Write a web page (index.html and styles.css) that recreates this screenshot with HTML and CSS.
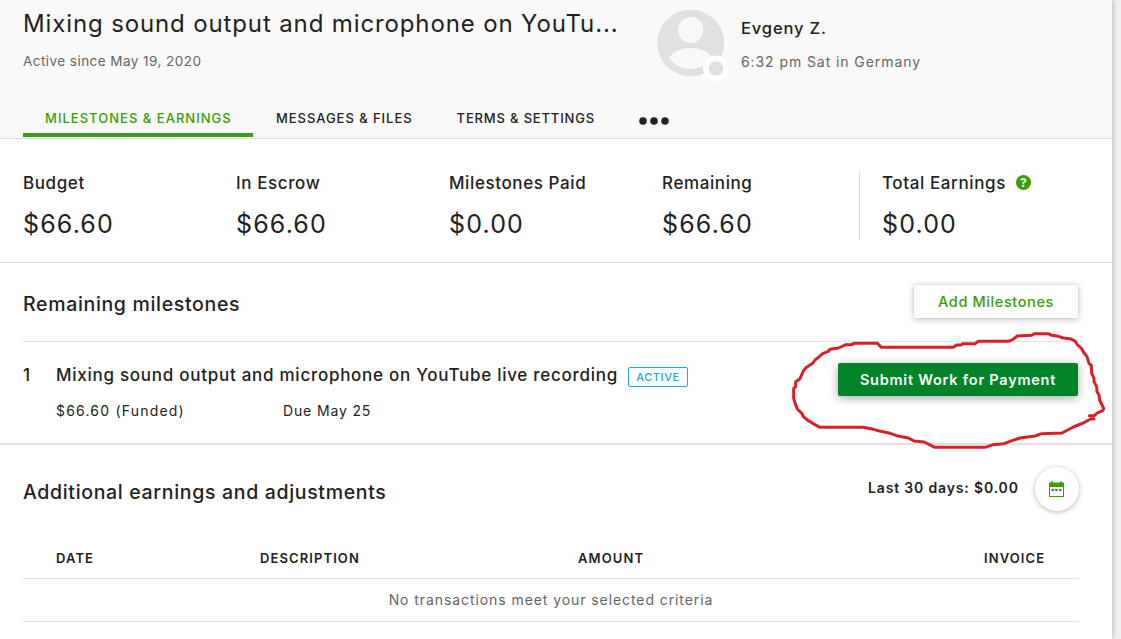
FILE: index.html
```html
<!DOCTYPE html>
<html lang="en">
  <head>
    <meta charset="UTF-8" />
    <title>Milestones &amp; Earnings</title>
    <link rel="stylesheet" href="styles.css">
  </head>
  <body>
    <main class="page">
      <header class="header">
        <div class="header-top">
          <div class="contract">
            <h1>Mixing sound output and microphone on YouTu...</h1>
            <p class="since">Active since May 19, 2020</p>
          </div>
          <div class="avatar">
            <svg width="72" height="74" viewBox="0 0 72 74">
              <circle cx="33.7" cy="33" r="33.4" fill="#e0e0e0" />
              <ellipse cx="33.7" cy="20" rx="12.500" ry="13" fill="#f9f9f9" />
              <path d="M12 48C16 41 24 38 33.500 38S51 41 55 48C50 55 42 59 33.500 59S17 55 12 48Z" fill="#f9f9f9" />
              <circle cx="59" cy="58.500" r="13" fill="#fff" />
              <circle cx="59" cy="58.500" r="7.300" fill="#e0e0e0" />
            </svg>
          </div>
          <div class="client">
            <p class="name">Evgeny Z.</p>
            <p class="time">6:32 pm Sat in Germany</p>
          </div>
        </div>
        <nav class="tabs">
          <a class="tab active">MILESTONES &amp; EARNINGS</a>
          <a class="tab">MESSAGES &amp; FILES</a>
          <a class="tab terms">TERMS &amp; SETTINGS</a>
          <a class="more">
            <svg width="30" height="8" viewBox="0 0 30 8" fill="#222">
              <circle cx="4" cy="4" r="3.800" />
              <circle cx="15" cy="4" r="3.800" />
              <circle cx="26" cy="4" r="3.800" />
            </svg>
          </a>
        </nav>
      </header>

      <section class="stats">
        <div class="stat">
          <p class="label">Budget</p>
          <p class="value">$66.60</p>
        </div>
        <div class="stat">
          <p class="label">In Escrow</p>
          <p class="value">$66.60</p>
        </div>
        <div class="stat">
          <p class="label">Milestones Paid</p>
          <p class="value">$0.00</p>
        </div>
        <div class="stat">
          <p class="label">Remaining</p>
          <p class="value">$66.60</p>
        </div>
        <div class="stat total">
          <p class="label">Total Earnings <b class="help">?</b></p>
          <p class="value">$0.00</p>
        </div>
      </section>

      <section class="milestones">
        <div class="section-head">
          <h2 class="remaining">Remaining milestones</h2>
          <button class="btn btn-add">Add Milestones</button>
        </div>
        <div class="milestone">
          <div class="number">1</div>
          <div class="info">
            <div class="milestone-title">
              <h3>Mixing sound output and microphone on YouTube live recording</h3>
              <div class="badge">ACTIVE</div>
            </div>
            <div class="meta">
              <span class="funded">$66.60 (Funded)</span>
              <span class="due">Due May 25</span>
            </div>
          </div>
          <button class="btn btn-submit">Submit Work for Payment</button>
        </div>
      </section>

      <section class="earnings">
        <div class="earnings-head">
          <h2 class="additional">Additional earnings and adjustments</h2>
          <p class="last">Last 30 days: $0.00</p>
          <button class="calendar">
            <svg width="15" height="16" viewBox="0 0 15 16">
              <path d="M0 1.500h2V.500h2v1h7V.500h2v1h2V16H0Z" fill="#37a000" />
              <path d="M1 6h13v9H1Z" fill="#fff" />
              <path d="M2.500 8h2.500v2H2.500zM6.200 8h2.500v2h-2.500zM10 8h2.500v2H10z" fill="#4b8a1c" />
            </svg>
          </button>
        </div>
        <table>
          <thead>
            <tr>
              <th class="date">DATE</th>
              <th class="description">DESCRIPTION</th>
              <th class="amount">AMOUNT</th>
              <th class="invoice">INVOICE</th>
            </tr>
          </thead>
          <tbody>
            <tr>
              <td colspan="4">No transactions meet your selected criteria</td>
            </tr>
          </tbody>
        </table>
      </section>
    </main>

    <!-- hand drawn circle around the submit button -->
    <svg class="marker" width="341" height="140" viewBox="0 0 1023 420">
      <path d="M942 297L932 297L910 309L880 321L846 339L785 341L765 348L720 354L690 364L672 371L640 374L615 382H465L432 366L402 363L385 354L350 347L330 340L302 334L280 328L250 322H120L98 310L82 300L70 290L67 282L52 267L45 248L41 235V205L47 200V185L60 176L70 153L78 143L98 130L105 120L118 110L128 101L145 94L150 88L176 84L198 74H215L222 70H292L304 82H520L530 75H544L548 71H585L595 64H685L698 59L712 48L755 46L763 41H805L815 46L835 49L850 54L870 56L885 63L893 75L904 85L912 99L921 110L927 130L934 136L935 160L942 175V185L950 200L951 215L957 225L959 240L971 266L968 272L952 279L943 287H928" />
    </svg>
  </body>
</html>
```

FILE: styles.css
```css
* {
  box-sizing: border-box;
}

body {
  margin: 0;
  height: 639px;
  overflow: hidden;
  position: relative;
  background-color: #f0f0f0;
  font-family: Inter, "Liberation Sans", sans-serif;
  font-size: 14px;
  color: #222;
}

h1,
h2,
h3,
p {
  margin: 0;
  white-space: nowrap;
}

.page {
  width: 1112px;
  height: 639px;
  background-color: #fff;
  box-shadow: 0 0 6px rgba(0, 0, 0, 0.3);
}

/* header */
.header {
  height: 139px;
  background-color: #f9f9f9;
  border-bottom: 1px solid #e0e0e0;
  padding: 8px 23px 0;
}

.header-top {
  display: flex;
  height: 93px;
}

.contract {
  width: 634px;
}

h1 {
  font-size: 24px;
  font-weight: 400;
  line-height: 32px;
  letter-spacing: 0.87px;
}

.since {
  margin-top: 11px;
  line-height: 20px;
  font-size: 13.5px;
  letter-spacing: 0.45px;
  color: #656565;
}

.avatar {
  width: 84px;
  padding-top: 2px;
}

.name {
  margin-top: 8px;
  font-size: 16.5px;
  font-weight: 500;
  line-height: 24px;
  letter-spacing: 0.85px;
}

.time {
  margin-top: 12px;
  line-height: 20px;
  letter-spacing: 0.92px;
  color: #656565;
}

.tabs {
  display: flex;
  height: 36px;
}

.tab {
  font-size: 13px;
  font-weight: 500;
  line-height: 35px;
  letter-spacing: 0.95px;
  white-space: nowrap;
  margin-right: 44px;
}

.tab.active {
  width: 230px;
  margin-right: 23px;
  padding-left: 22px;
  color: #37a000;
  border-bottom: 4px solid #3c9a14;
  letter-spacing: 1.02px;
}

.tab.terms {
  letter-spacing: 0.83px;
}

.more {
  padding-top: 10px;
}

/* stats */
.stats {
  display: grid;
  grid-template-columns: 213px 213px 213px 197px 1fr;
  height: 124px;
  padding: 32px 23px 23px;
  border-bottom: 1px solid #e0e0e0;
}

.total {
  border-left: 1px solid #ddd;
  padding-left: 22px;
  height: 69px;
}

.label {
  display: flex;
  align-items: center;
  height: 24px;
  font-size: 17px;
  font-weight: 500;
  letter-spacing: 0.6px;
}

.value {
  margin-top: 13px;
  font-size: 25px;
  line-height: 32px;
  letter-spacing: 1.15px;
}

.help {
  width: 15px;
  height: 15px;
  margin: -1px 0 0 10px;
  border-radius: 50%;
  background-color: #37a000;
  color: #fff;
  font-size: 12px;
  line-height: 15px;
  letter-spacing: 0;
  text-align: center;
}

/* milestones */
.milestones {
  height: 182px;
  border-bottom: 2px solid #e0e0e0;
  padding: 22px 34px 0 23px;
}

.section-head {
  display: flex;
  justify-content: space-between;
  height: 57px;
  margin-right: -1px;
  padding-right: 1px;
  border-bottom: 1px solid #e0e0e0;
}

h2 {
  font-size: 19.5px;
  font-weight: 500;
  line-height: 39px;
  letter-spacing: 0.67px;
}

.btn {
  height: 33px;
  padding: 0;
  border: none;
  border-radius: 2px;
  font-family: inherit;
  font-size: 14.5px;
  font-weight: 500;
  letter-spacing: 0.6px;
  white-space: nowrap;
}

.btn-add {
  width: 164px;
  background-color: #fff;
  color: #37a000;
  box-shadow: 0 1px 6px rgba(0, 0, 0, 0.3);
}

.btn-submit {
  width: 240px;
  margin-top: 1px;
  background-color: #008329;
  color: #fff;
  font-weight: 600;
  letter-spacing: 0.76px;
  box-shadow: 0 2px 10px rgba(0, 0, 0, 0.35);
}

.milestone {
  display: flex;
  padding-top: 20px;
}

.number {
  width: 33px;
  font-size: 17px;
  font-weight: 500;
  line-height: 27px;
}

.info {
  flex: 1;
}

.milestone-title {
  display: flex;
  height: 27px;
}

h3 {
  width: 572px;
  font-size: 17px;
  font-weight: 500;
  line-height: 27px;
  letter-spacing: 0.73px;
}

.badge {
  width: 60px;
  height: 20px;
  margin-top: 5px;
  border: 1px solid #1caadf;
  border-radius: 2px;
  color: #1caadf;
  font-size: 11px;
  font-weight: 500;
  line-height: 19px;
  letter-spacing: 0.6px;
  text-align: center;
}

.meta {
  display: flex;
  margin-top: 12px;
  line-height: 20px;
}

.funded {
  width: 227px;
  letter-spacing: 1.2px;
}

.due {
  letter-spacing: 0.85px;
}

/* earnings */
.earnings {
  padding: 22px 33px 0 23px;
}

.earnings-head {
  display: flex;
  align-items: flex-start;
  height: 72px;
}

.additional {
  width: 845px;
  line-height: 50px;
}

.last {
  width: 167px;
  font-weight: 600;
  line-height: 42px;
  letter-spacing: 0.84px;
}

.calendar {
  display: flex;
  align-items: center;
  justify-content: center;
  flex-shrink: 0;
  width: 44px;
  height: 44px;
  padding: 0 1px 0 0;
  border: none;
  border-radius: 50%;
  background-color: #fff;
  box-shadow: 0 1px 5px rgba(0, 0, 0, 0.3);
}

table {
  width: 1056px;
  table-layout: fixed;
  border-collapse: separate;
  border-spacing: 0;
}

th {
  height: 40px;
  padding: 0 0 1px;
  border-bottom: 1px solid #e0e0e0;
  font-size: 13px;
  font-weight: 600;
  letter-spacing: 1.1px;
  text-align: left;
}

.date {
  width: 237px;
  padding-left: 33px;
}

.description {
  width: 318px;
}

.amount {
  width: 406px;
}

td {
  height: 43px;
  padding: 0 0 2px;
  border-bottom: 1px solid #e0e0e0;
  color: #656565;
  letter-spacing: 0.92px;
  text-align: center;
}

/* red marker line */
.marker {
  position: absolute;
  left: 780px;
  top: 320px;
  fill: none;
  stroke: #d8202a;
  stroke-width: 9;
  stroke-linejoin: round;
  stroke-linecap: round;
  pointer-events: none;
}
```
